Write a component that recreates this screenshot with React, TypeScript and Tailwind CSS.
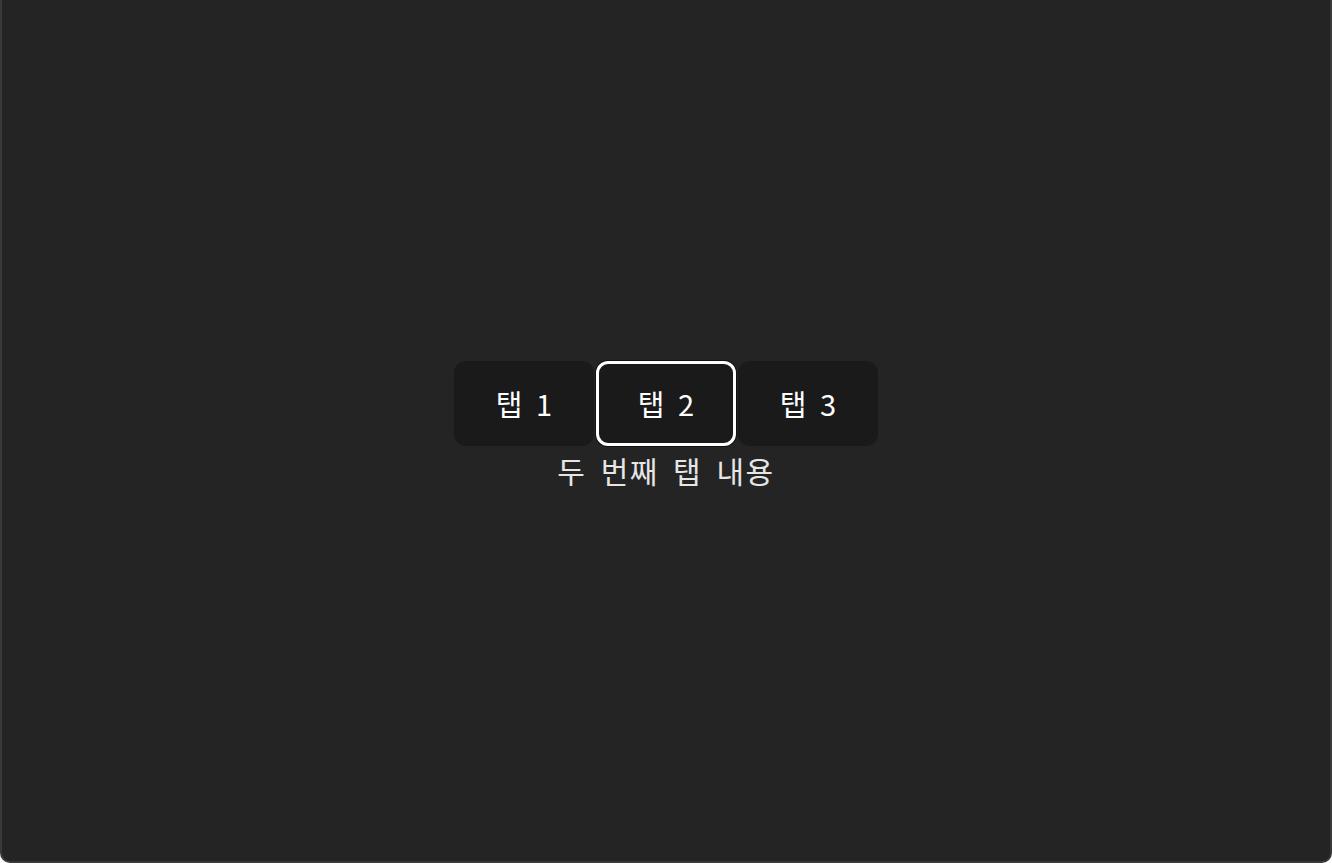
import { useState } from "react";

const tabs = [
  { label: "탭 1", content: "첫 번째 탭 내용" },
  { label: "탭 2", content: "두 번째 탭 내용" },
  { label: "탭 3", content: "세 번째 탭 내용" },
];

export default function App() {
  const [active, setActive] = useState(1);

  return (
    <div
      className="h-[863px] w-[1332px] overflow-hidden rounded-b-[10px] border-x-2 border-b-2 border-[#3a3a3a] bg-[#242424] text-white"
      style={{ fontFamily: '"Noto Sans CJK KR", "Noto Sans", sans-serif' }}
    >
      <div className="flex h-full flex-col items-center justify-center pb-[6px]">
        <div className="flex gap-[2px]">
          {tabs.map((tab, i) => (
            <button
              key={tab.label}
              onClick={() => setActive(i)}
              className={
                "flex h-[85px] w-[140px] items-center justify-center rounded-[12px] bg-[#1a1a1a] text-[29px] text-white [word-spacing:7px] " +
                (i === active ? "border-[3px] border-white ring-1 ring-[#111]" : "border-[3px] border-transparent")
              }
            >
              {tab.label}
            </button>
          ))}
        </div>
        <p className="text-[30px] leading-[48px] tracking-[1.5px] text-[#e6e6e6] [word-spacing:6px]">
          {tabs[active].content}
        </p>
      </div>
    </div>
  );
}
